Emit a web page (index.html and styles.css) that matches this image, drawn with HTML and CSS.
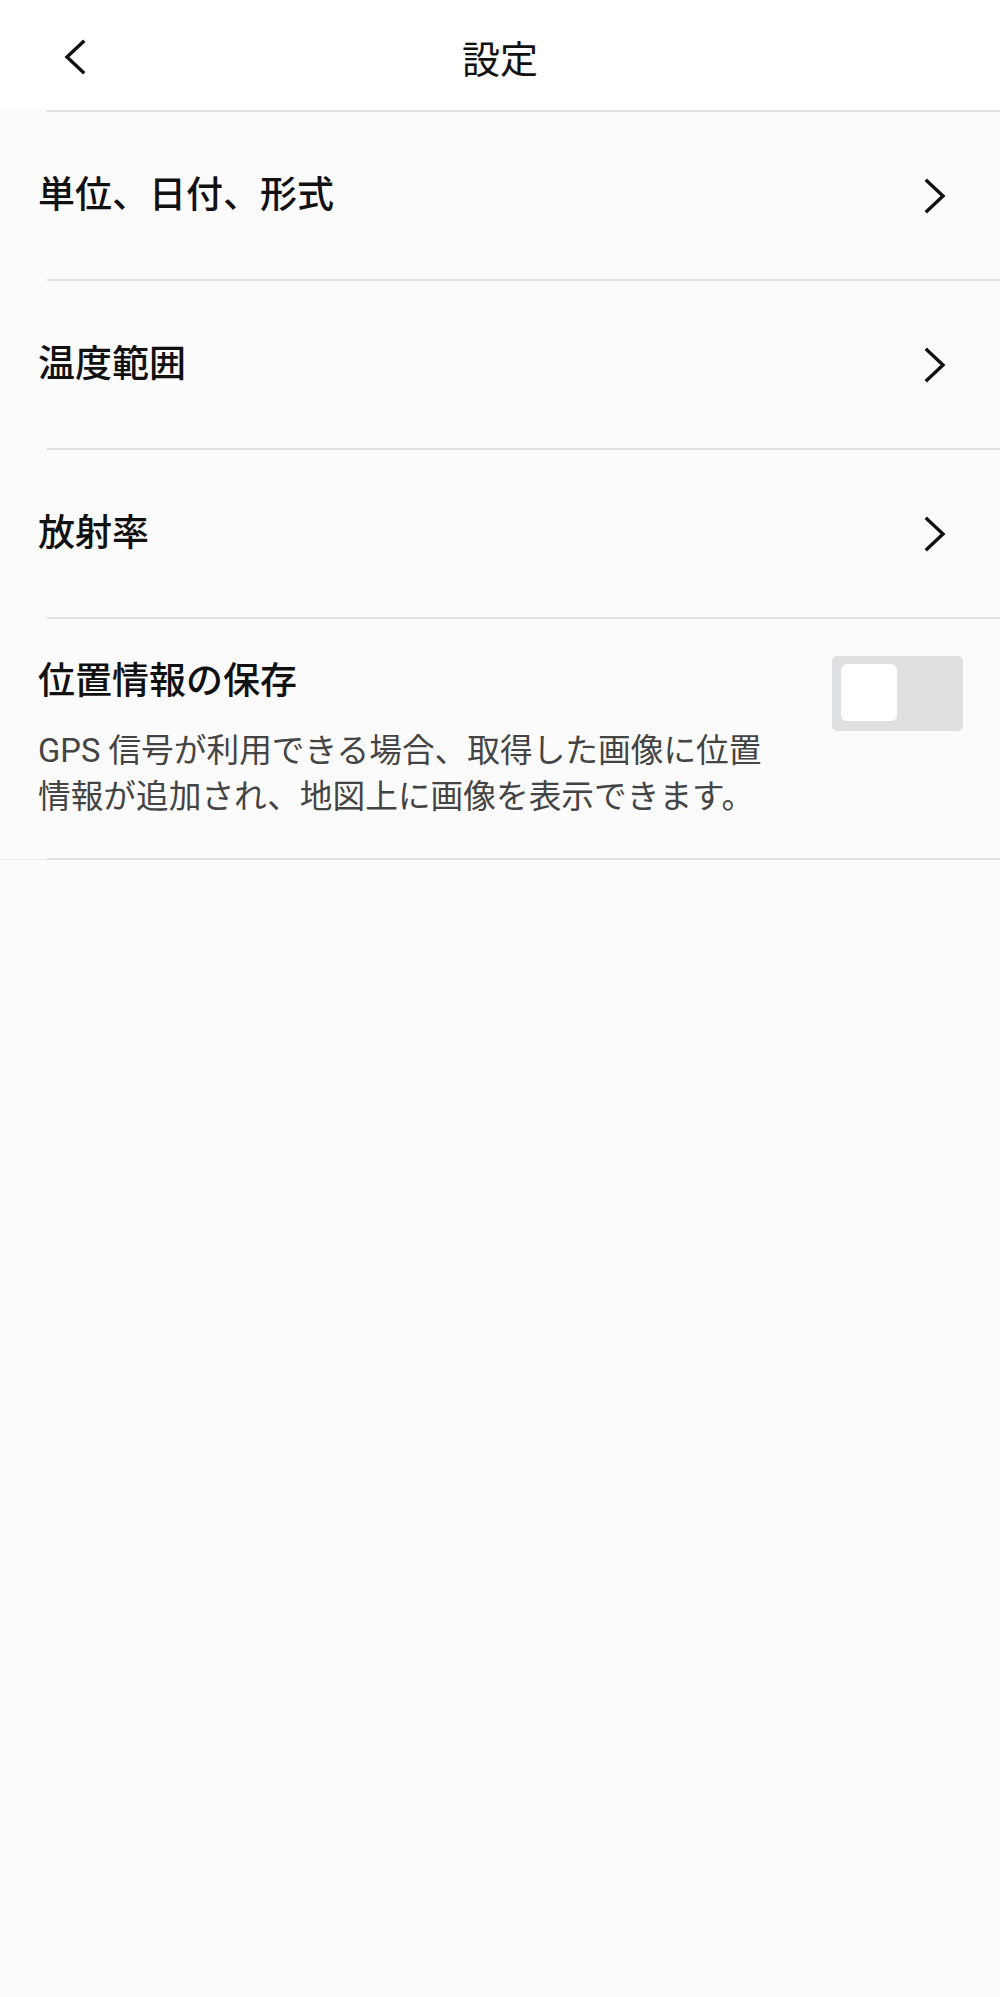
FILE: index.html
```html
<!DOCTYPE html>
<html lang="ja">
<head>
<meta charset="utf-8">
<title>設定</title>
<link rel="stylesheet" href="styles.css">
</head>
<body>
<header class="topbar">
  <div class="back">
    <svg width="24" height="36" viewBox="0 0 24 36"><path d="M20 3 L4 18 L20 33" fill="none" stroke="#111" stroke-width="3.4" stroke-linecap="square" stroke-linejoin="miter"/></svg>
  </div>
  <h1 class="title">設定</h1>
  <div class="spacer"></div>
</header>
<div class="sep"></div>
<main class="list">
  <div class="row">
    <span class="label">単位、日付、形式</span>
    <svg class="chev" width="24" height="36" viewBox="0 0 24 36"><path d="M4 3 L20 18 L4 33" fill="none" stroke="#111" stroke-width="3.4" stroke-linecap="square"/></svg>
  </div>
  <div class="sep"></div>
  <div class="row">
    <span class="label">温度範囲</span>
    <svg class="chev" width="24" height="36" viewBox="0 0 24 36"><path d="M4 3 L20 18 L4 33" fill="none" stroke="#111" stroke-width="3.4" stroke-linecap="square"/></svg>
  </div>
  <div class="sep"></div>
  <div class="row">
    <span class="label">放射率</span>
    <svg class="chev" width="24" height="36" viewBox="0 0 24 36"><path d="M4 3 L20 18 L4 33" fill="none" stroke="#111" stroke-width="3.4" stroke-linecap="square"/></svg>
  </div>
  <div class="sep"></div>
  <div class="row-toggle">
    <div class="text">
      <div class="label">位置情報の保存</div>
      <p class="desc">GPS 信号が利用できる場合、取得した画像に位置情報が追加され、地図上に画像を表示できます。</p>
    </div>
    <div class="toggle"><div class="knob"></div></div>
  </div>
  <div class="sep last"></div>
</main>
</body>
</html>
```
FILE: styles.css
```css
html, body {
  margin: 0;
  padding: 0;
}
body {
  background: #fbfbfb;
  min-height: 1997px;
  font-family: Roboto, "Noto Sans CJK JP", "Noto Sans", sans-serif;
  color: #111;
}
.topbar {
  background: #fff;
  height: 110px;
  box-sizing: border-box;
  padding: 4px 0 0 63px;
  display: grid;
  grid-template-columns: 1fr auto 1fr;
  align-items: center;
}
.back {
  display: flex;
  align-items: center;
}
.back svg {
  display: block;
}
.title {
  margin: 5px 0 0 -63px;
  font-size: 38px;
  font-weight: 400;
  line-height: 48px;
  letter-spacing: 0;
}
.sep {
  height: 2px;
  margin-left: 47px;
  background: #e1e1e1;
}
.list {
  border-bottom: 1px solid #ededed;
}
.sep.last {
  margin-bottom: -1px;
}
.row {
  height: 167px;
  display: flex;
  align-items: center;
  justify-content: space-between;
  padding: 0 53px 0 38px;
}
.label {
  font-size: 37px;
  line-height: 48px;
  font-weight: 500;
  color: #111;
}
.chev {
  display: block;
}
.row-toggle {
  display: flex;
  justify-content: space-between;
  align-items: flex-start;
  padding: 39px 37px 38px 38px;
}
.text {
  width: 745px;
}
.desc {
  margin: 22px 0 0;
  font-size: 32.7px;
  line-height: 46px;
  color: #444;
  font-weight: 400;
}
.toggle {
  margin-top: -2px;
  width: 131px;
  height: 75px;
  border-radius: 5px;
  background: #dfe0e1;
  box-sizing: border-box;
  padding: 8px 0 0 9px;
}
.knob {
  width: 56px;
  height: 57px;
  border-radius: 6px;
  background: #fff;
}
```
